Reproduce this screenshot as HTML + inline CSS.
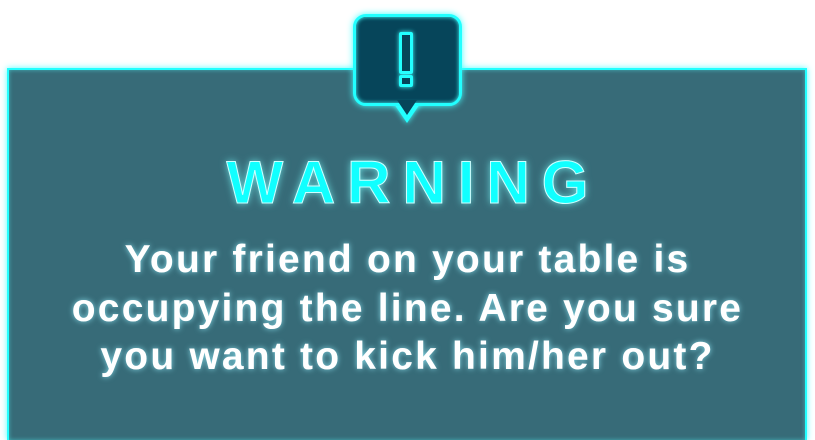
<!DOCTYPE html>
<html><head><style>
html,body{margin:0;padding:0;width:815px;height:440px;overflow:hidden;background:#fff;font-family:"Liberation Sans",sans-serif}
.wrap{position:relative;width:815px;height:440px;overflow:hidden}
.panel{position:absolute;left:7px;top:68px;width:798px;height:372px;border-bottom:none;background:#376b78;border:2px solid #2ff;border-bottom:0;box-sizing:border-box;width:800px;box-shadow:0 0 6px #5ff, inset 0 0 4px rgba(80,255,255,.5)}
.bubble{position:absolute;left:353px;top:14px;width:103px;height:86px;background:#06455a;border:3px solid #2ff;border-radius:13px;box-shadow:0 0 7px #4ff, inset 0 0 4px #4ff}
.tail{position:absolute;left:392px;top:101px;width:0;height:0;border-left:15px solid transparent;border-right:15px solid transparent;border-top:22px solid #2ff;filter:drop-shadow(0 0 3px #4ff)}
.tail2{position:absolute;left:397px;top:100px;width:0;height:0;border-left:10px solid transparent;border-right:10px solid transparent;border-top:15px solid #06455a}
.bar{position:absolute;left:399px;top:32px;width:8px;height:36px;border:3px solid #2ff;border-radius:2px;box-shadow:0 0 5px #4ff}
.dot{position:absolute;left:399px;top:75px;width:8px;height:6px;border:3px solid #2ff;border-radius:2px;box-shadow:0 0 5px #4ff}
.warn{position:absolute;left:0;top:148px;width:815px;padding-left:12px;box-sizing:border-box;text-align:center;font-weight:bold;font-size:60px;letter-spacing:12px;color:#1ff;-webkit-text-stroke:1px #cff;text-shadow:0 0 8px rgba(120,255,255,.8)}
.msg{position:absolute;left:0;top:236px;width:815px;text-align:center;font-weight:bold;font-size:39px;line-height:48.5px;letter-spacing:2.2px;color:#fff;text-shadow:0 0 6px rgba(150,240,255,.8);white-space:nowrap}
</style></head><body><div class="wrap">
<div class="panel"></div>
<div class="tail"></div>
<div class="bubble"></div>
<div class="tail2"></div>
<div class="bar"></div>
<div class="dot"></div>
<div class="warn">WARNING</div>
<div class="msg">Your friend on your table is<br>occupying the line. Are you sure<br>you want to kick him/her out?</div>
</div></body></html>
